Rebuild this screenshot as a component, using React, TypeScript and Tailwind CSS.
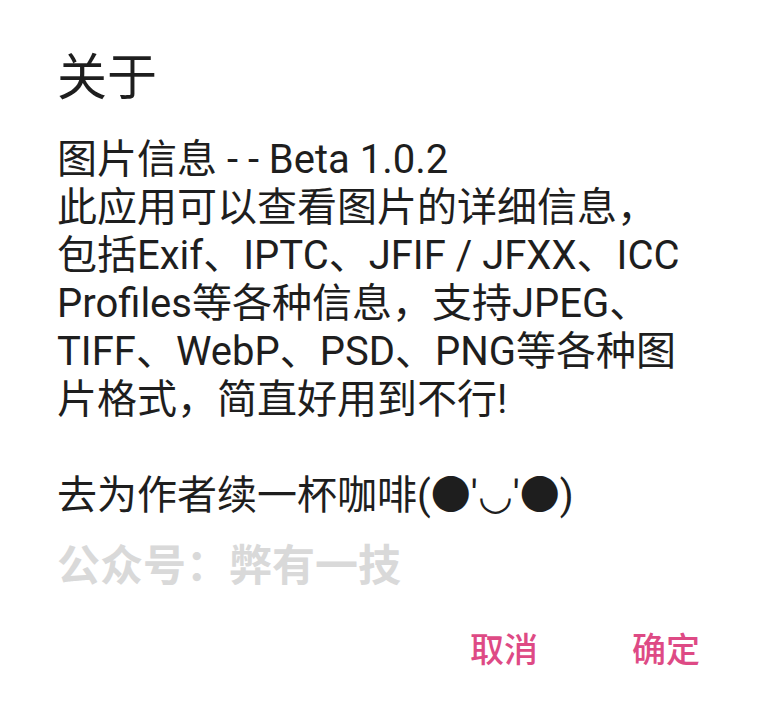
import React from "react";

const font = {
  fontFamily: 'Roboto, "Noto Sans CJK SC", "Noto Sans", sans-serif',
};

export default function App() {
  const lines = [
    "图片信息 - - Beta 1.0.2",
    "此应用可以查看图片的详细信息，",
    "包括Exif、IPTC、JFIF / JFXX、ICC",
    "Profiles等各种信息，支持JPEG、",
    "TIFF、WebP、PSD、PNG等各种图",
    "片格式，简直好用到不行!",
  ];
  return (
    <div
      className="w-[776px] h-[718px] bg-white text-[#1e1e1e] overflow-hidden"
      style={font}
    >
      <div className="pl-[57px] pt-[49px]">
        <h1 className="text-[50px] leading-[58px] font-normal">关于</h1>
        <div className="mt-[29px] text-[40px] leading-[48px] whitespace-nowrap">
          {lines.map((l) => (
            <div key={l}>{l}</div>
          ))}
          <div className="h-[48px]" />
          <div>去为作者续一杯咖啡(●'◡'●)</div>
        </div>
        <div className="mt-[22px] text-[43px] leading-[48px] font-bold text-[#d9d9d9]">
          公众号：弊有一技
        </div>
      </div>
      <div className="flex justify-end pr-[76px] mt-[40px] gap-[94px] text-[34px] leading-[40px] font-medium text-[#de4a85]">
        <span>取消</span>
        <span>确定</span>
      </div>
    </div>
  );
}
